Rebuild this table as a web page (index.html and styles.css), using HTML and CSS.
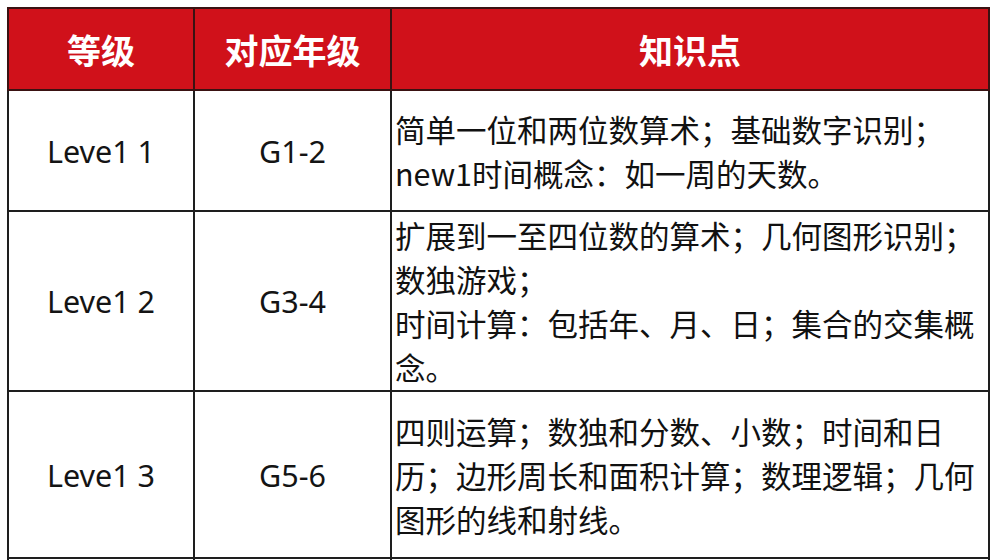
FILE: index.html
```html
<!DOCTYPE html>
<html lang="zh-CN">
<head>
<meta charset="utf-8">
<title>等级与知识点</title>
<link rel="stylesheet" href="styles.css">
</head>
<body>
<table class="levels">
  <colgroup>
    <col class="c-level">
    <col class="c-grade">
    <col class="c-topic">
  </colgroup>
  <thead>
    <tr class="head">
      <th>等级</th>
      <th>对应年级</th>
      <th>知识点</th>
    </tr>
  </thead>
  <tbody>
    <tr class="r1">
      <td class="lat">Leve1 1</td>
      <td class="lat">G1-2</td>
      <td class="topic">简单一位和两位数算术；基础数字识别；<br>new1时间概念：如一周的天数。</td>
    </tr>
    <tr class="r2">
      <td class="lat">Leve1 2</td>
      <td class="lat">G3-4</td>
      <td class="topic">扩展到一至四位数的算术；几何图形识别；<br>数独游戏；<br>时间计算：包括年、月、日；集合的交集概念。</td>
    </tr>
    <tr class="r3">
      <td class="lat">Leve1 3</td>
      <td class="lat">G5-6</td>
      <td class="topic">四则运算；数独和分数、小数；时间和日历；边形周长和面积计算；数理逻辑；几何图形的线和射线。</td>
    </tr>
    <tr class="r4">
      <td class="lat"></td>
      <td class="lat"></td>
      <td class="topic"></td>
    </tr>
  </tbody>
</table>
</body>
</html>
```
FILE: styles.css
```css
html, body {
  margin: 0;
  padding: 0;
  background: #ffffff;
  overflow: hidden;
}

body {
  padding: 7px 0 0 7px;
  font-family: "Noto Sans CJK SC", "Noto Sans", sans-serif;
  color: #111111;
}

.levels {
  border-collapse: collapse;
  table-layout: fixed;
  width: 981px;
}

.c-level { width: 186px; }
.c-grade { width: 197px; }
.c-topic { width: 598px; }

.levels th,
.levels td {
  border: 2px solid #1e1e1e;
  padding: 0;
  vertical-align: middle;
}

.head th {
  height: 80px;
  background: #d0111a;
  color: #ffffff;
  font-family: "Noto Sans CJK SC", sans-serif;
  font-weight: 700;
  font-size: 34px;
  text-align: center;
  border-color: #3a1212;
}

.lat {
  text-align: center;
  font-family: "Noto Sans", "Noto Sans CJK SC", sans-serif;
  font-size: 30.5px;
  color: #141414;
}

.topic {
  text-align: left;
  padding: 0 4px 0 3px !important;
  font-size: 30.5px;
  line-height: 44px;
}

.r1 td { height: 119px; }
.r2 td { height: 178px; }
.r3 td { height: 165px; }
.r4 td { height: 1px; }
```
